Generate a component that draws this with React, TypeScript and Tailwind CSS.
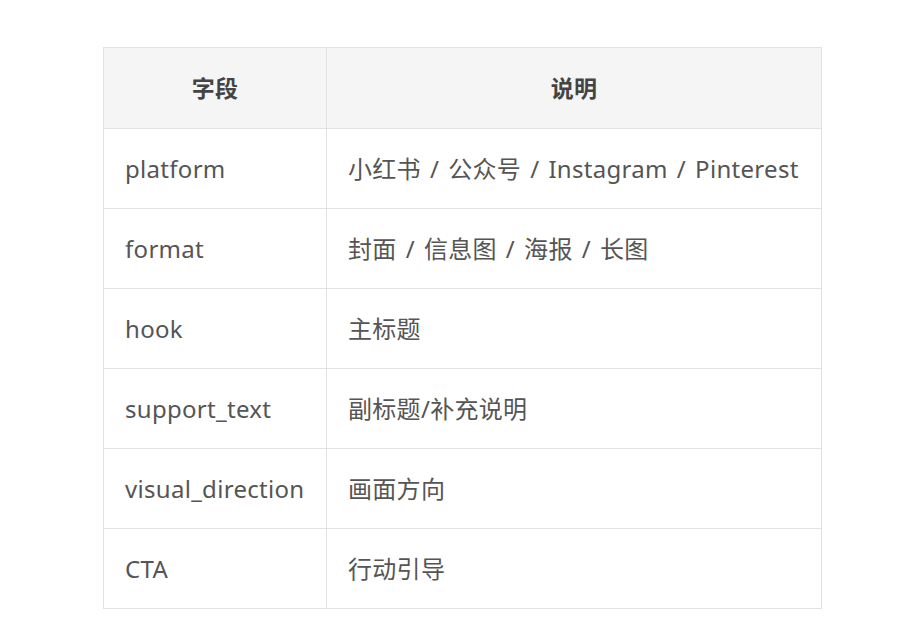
const rows = [
  ['platform', '小红书 / 公众号 / Instagram / Pinterest'],
  ['format', '封面 / 信息图 / 海报 / 长图'],
  ['hook', '主标题'],
  ['support_text', '副标题/补充说明'],
  ['visual_direction', '画面方向'],
  ['CTA', '行动引导'],
];

export default function App() {
  return (
    <div
      className="min-h-screen w-full bg-white pt-[47px] pl-[103px]"
      style={{ fontFamily: '"Noto Sans", "Noto Sans CJK SC", sans-serif' }}
    >
      <table className="w-[719px] table-fixed border-collapse text-[24px] text-[#555] tracking-[0.3px]">
        <thead>
          <tr className="h-[81px] bg-[#f5f5f5]">
            <th className="w-[223px] border border-[#e2e2e2] text-[23px] font-bold text-[#444]">字段</th>
            <th className="border border-[#e2e2e2] text-[23px] font-bold text-[#444]">说明</th>
          </tr>
        </thead>
        <tbody>
          {rows.map(([field, desc]) => (
            <tr key={field} className="h-[80px]">
              <td className="border border-[#e2e2e2] px-[21px] whitespace-nowrap">{field}</td>
              <td className="border border-[#e2e2e2] px-[21px] whitespace-nowrap [word-spacing:2.5px]">{desc}</td>
            </tr>
          ))}
        </tbody>
      </table>
    </div>
  );
}
